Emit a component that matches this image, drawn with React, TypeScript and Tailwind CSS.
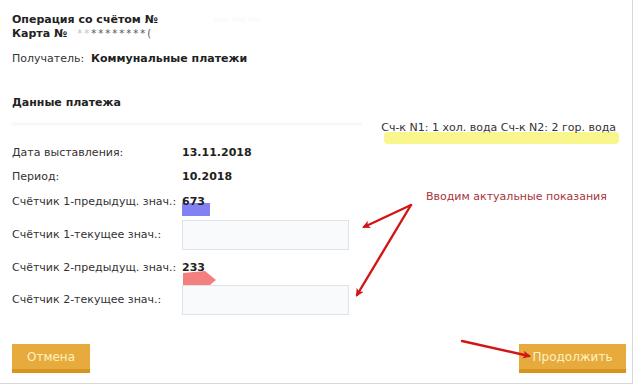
const rows = [
  { label: "Дата выставления:", value: "13.11.2018", mt: "mt-[11px]" },
  { label: "Период:", value: "10.2018", mt: "mt-[10px]" },
];

const Arrows = () => (
  <svg
    className="absolute left-0 top-0 pointer-events-none"
    width={640}
    height={385}
    viewBox="0 0 640 385"
  >
    <defs>
      <marker
        id="head"
        markerWidth="8"
        markerHeight="8"
        refX="6"
        refY="4"
        orient="auto"
        markerUnits="userSpaceOnUse"
      >
        <path d="M0,0 L8,4 L0,8 L2,4 Z" fill="#d41515" />
      </marker>
    </defs>
    <g stroke="#d41515" strokeWidth={2.4} fill="none" strokeLinecap="round">
      <line x1={411} y1={205} x2={364} y2={227} markerEnd="url(#head)" />
      <line x1={411} y1={205} x2={357} y2={295} markerEnd="url(#head)" />
      <line x1={462} y1={341} x2={529} y2={356} markerEnd="url(#head)" />
    </g>
  </svg>
);

const App = () => {
  return (
    <div
      className="relative w-[640px] h-[385px] bg-white overflow-hidden text-[11px] text-[#333]"
      style={{ fontFamily: '"DejaVu Sans", Verdana, sans-serif' }}
    >
      <div className="w-[633px] h-[384px] border-r border-b border-[#d8d8d8] pl-3 pt-[13px] leading-[14px]">
        <div className="font-bold text-[#222] flex">
          Операция со счётом №
          <span className="ml-14 text-[#d4d4d4] blur-[1.5px] font-normal">
            ···· ···· ···
          </span>
        </div>
        <div className="font-bold text-[#222] flex items-center">
          Карта №
          <span className="ml-[10px] text-[#c4c4c4] font-normal text-[10px] tracking-[2px]">
            **
          </span>
          <span className="text-[#555] font-normal text-[10px] tracking-[2px]">
            ********(
          </span>
        </div>
        <div className="mt-[11px] flex">
          <span className="w-[79px]">Получатель:</span>
          <span className="font-bold text-[#222]">Коммунальные платежи</span>
        </div>
        <div className="mt-[30px] font-bold text-[#222]">Данные платежа</div>
        <div className="mt-[11px] flex justify-end pr-[16px] relative">
          <div className="absolute left-0 top-[2px] w-[350px] h-[2px] bg-[#f2f2f2] blur-[1px]" />
          <span className="relative">
            <span className="absolute left-[3px] right-[-3px] top-[11px] h-[12px] rounded-sm bg-[#f8f68c]" />
            <span className="relative">
              Сч-к N1: 1 хол. вода Сч-к N2: 2 гор. вода
            </span>
          </span>
        </div>
        {rows.map(({ label, value, mt }) => (
          <div key={label} className={`${mt} flex`}>
            <span className="w-[170px]">{label}</span>
            <span className="font-bold text-[#222]">{value}</span>
          </div>
        ))}
        <div className="mt-[11px] flex">
          <span className="w-[170px]">Счётчик 1-предыдущ. знач.:</span>
          <span className="relative font-bold text-[#222]">
            <span className="absolute left-0 top-[8px] w-[28px] h-[13px] bg-[#8181f3]" />
            <span className="relative">673</span>
          </span>
        </div>
        <div className="mt-[11px] flex items-center h-[30px]">
          <span className="w-[170px]">Счётчик 1-текущее знач.:</span>
          <div className="w-[167px] h-[30px] border border-[#dde3e8] bg-[#f9fafb]" />
        </div>
        <div className="mt-[11px] flex">
          <span className="w-[170px]">Счётчик 2-предыдущ. знач.:</span>
          <span className="relative font-bold text-[#222]">
            <svg
              className="absolute left-[1px] top-[10px]"
              width={34}
              height={15}
              viewBox="0 0 34 15"
            >
              <path d="M0,2 L22,0 L33,9 L27,14 L0,14 Z" fill="#f47f7f" />
            </svg>
            <span className="relative">233</span>
          </span>
        </div>
        <div className="mt-[10px] flex items-center h-[30px]">
          <span className="w-[170px]">Счётчик 2-текущее знач.:</span>
          <div className="w-[167px] h-[30px] border border-[#dde3e8] bg-[#f9fafb]" />
        </div>
        <div className="mt-[29px] flex justify-between pr-[6px]">
          <button className="w-[78px] h-[29px] bg-[#e6ab3c] border-b-[4px] border-[#d6951f] text-[12px] text-[#fdf1c4]">
            Отмена
          </button>
          <button className="w-[107px] h-[29px] bg-[#e6ab3c] border-b-[4px] border-[#d6951f] text-[12px] text-[#fdf1c4]">
            Продолжить
          </button>
        </div>
      </div>
      <div className="absolute left-[426px] top-[189px] text-[11px] text-[#a8343a]">
        Вводим актуальные показания
      </div>
      <Arrows />
    </div>
  );
};

export default App;
